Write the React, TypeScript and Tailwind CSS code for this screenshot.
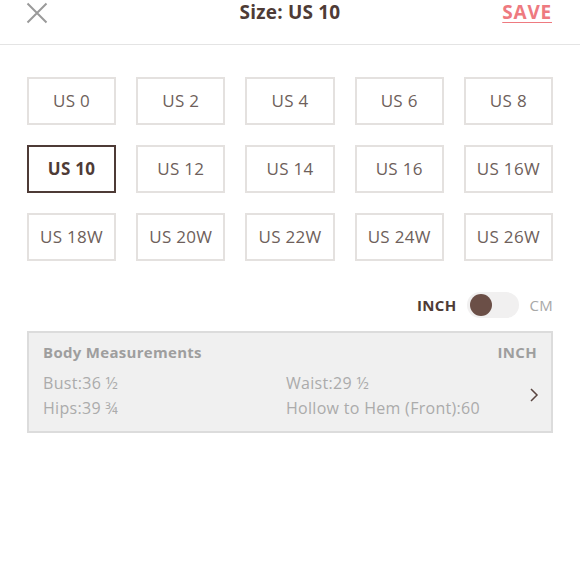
import React from "react";

const sizes = [
  ["US 0", "US 2", "US 4", "US 6", "US 8"],
  ["US 10", "US 12", "US 14", "US 16", "US 16W"],
  ["US 18W", "US 20W", "US 22W", "US 24W", "US 26W"],
];

export default function App() {
  return (
    <div className="w-[580px] h-[578px] bg-white" style={{ fontFamily: '"Open Sans", sans-serif' }}>
      <div className="relative h-[45px] border-b border-[#e4e4e4] flex items-start justify-center">
        <svg className="absolute left-[26px] top-[2px]" width="22" height="22" viewBox="0 0 22 22">
          <path d="M1.5 1.5 L20.5 20.5 M20.5 1.5 L1.5 20.5" stroke="#9a9a9a" strokeWidth="2" />
        </svg>
        <div className="mt-[0px] text-[19px] leading-[25px] font-bold text-[#4e3b36] tracking-[0.2px]">Size: US 10</div>
        <div className="absolute right-[28px] top-[0px] text-[19px] leading-[25px] font-bold text-[#ee7a80] tracking-[0.8px] underline underline-offset-[3px] decoration-[1px]">SAVE</div>
      </div>

      <div className="px-[27px] pt-[32px] flex flex-col gap-[20px]">
        {sizes.map((row, i) => (
          <div key={i} className="grid grid-cols-5 gap-x-[20px]">
            {row.map((s) => {
              const sel = s === "US 10";
              return (
                <div
                  key={s}
                  className={
                    sel
                      ? "h-[48px] border-2 border-[#4e3b36] flex items-center justify-center text-[17px] tracking-[0.3px] font-bold text-[#4e3b36]"
                      : "h-[48px] border-2 border-[#e4e1df] flex items-center justify-center text-[17px] tracking-[0.3px] text-[#6e5f5b]"
                  }
                >
                  {s}
                </div>
              );
            })}
          </div>
        ))}
      </div>

      <div className="flex items-center justify-end pr-[27px] mt-[31px] h-[26px]">
        <span className="text-[15px] font-bold text-[#4e3b36] tracking-[0.3px]">INCH</span>
        <div className="ml-[11px] w-[52px] h-[26px] rounded-full bg-[#f1f0f0] flex items-center pl-[3px]">
          <div className="w-[22px] h-[22px] rounded-full bg-[#6b4f47]" />
        </div>
        <span className="ml-[10px] text-[15px] text-[#a8a8a8] tracking-[0.3px]">CM</span>
      </div>

      <div className="mx-[27px] mt-[13px] h-[102px] bg-[#f0f0f0] border-2 border-[#dcdcdc] px-[14px] pt-[8px] flex flex-col">
        <div className="flex items-center justify-between">
          <span className="text-[15px] font-bold text-[#9e9e9e] tracking-[0.3px]">Body Measurements</span>
          <span className="text-[15px] font-bold text-[#9e9e9e] tracking-[0.3px]">INCH</span>
        </div>
        <div className="flex items-center mt-[7px]">
          <div className="grid grid-cols-[243px_1fr] gap-y-[1px] flex-1 text-[16px] tracking-[0.3px] text-[#ababab]">
            <span>Bust:36 ½</span>
            <span>Waist:29 ½</span>
            <span>Hips:39 ¾</span>
            <span>Hollow to Hem (Front):60</span>
          </div>
          <svg width="10" height="16" viewBox="0 0 10 16" className="mr-[-2px]">
            <path d="M2 2 L8 8 L2 14" stroke="#5a4540" strokeWidth="1.5" fill="none" />
          </svg>
        </div>
      </div>
    </div>
  );
}
